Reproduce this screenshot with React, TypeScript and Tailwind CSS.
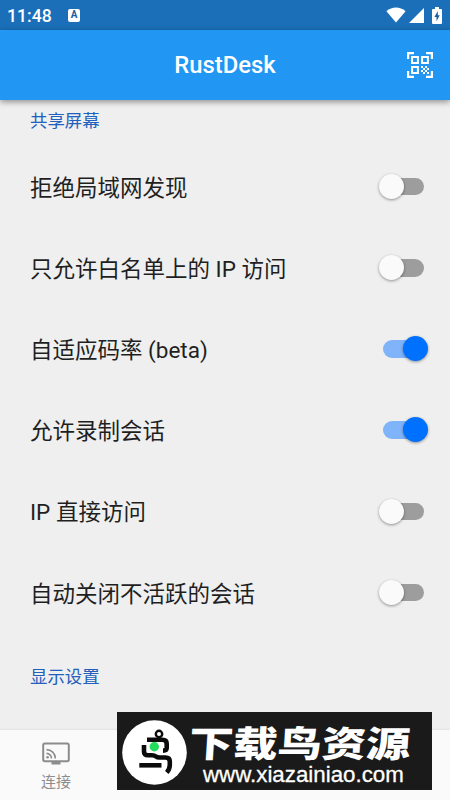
import React, { useState } from 'react';

interface Setting {
  id: string;
  label: string;
  enabled: boolean;
}

const initialSettings: Setting[] = [
  { id: 'deny-lan', label: '拒绝局域网发现', enabled: false },
  { id: 'whitelist', label: '只允许白名单上的 IP 访问', enabled: false },
  { id: 'abr', label: '自适应码率 (beta)', enabled: true },
  { id: 'record', label: '允许录制会话', enabled: true },
  { id: 'direct-ip', label: 'IP 直接访问', enabled: false },
  { id: 'auto-close', label: '自动关闭不活跃的会话', enabled: false },
];

const StatusBar: React.FC = () => (
  <div className="flex h-[30px] shrink-0 items-center justify-between bg-[#1a6fb8] pr-[8px] pl-[7px] text-white">
    <div className="flex items-center gap-[17px]">
      <span className="w-[44px] pt-[3px] text-[17.6px] leading-none font-medium whitespace-nowrap">11:48</span>
      <span className="flex h-[13px] w-[12px] items-center justify-center rounded-[2px] bg-white text-[10px] leading-none font-bold text-[#1a5f9f]">
        A
      </span>
    </div>
    <div className="flex items-center">
      <svg className="h-[16px] w-[20px]" viewBox="0 0 20 16" fill="currentColor">
        <path d="M10 15.6 0.4 4.2C6-.6 14-.6 19.6 4.2Z" />
      </svg>
      <svg className="ml-[3px] h-[15px] w-[15px]" viewBox="0 0 15 15" fill="currentColor">
        <path d="M15 0v15H0Z" />
      </svg>
      <svg className="ml-[8px] h-[17px] w-[10px]" viewBox="0 0 10 17">
        <path d="M3 0h4v2h2q1 0 1 1v13q0 1-1 1H1q-1 0-1-1V3q0-1 1-1h2Z" fill="currentColor" />
        <path d="M5.8 4 2.4 10h2.1v4.2L7.7 8.3H5.8Z" fill="#1a5f9f" />
      </svg>
    </div>
  </div>
);

const ScanIcon: React.FC = () => (
  <svg className="h-[26px] w-[26px]" viewBox="0 0 26 26" fill="none" stroke="currentColor" strokeWidth="2.2">
    <path d="M1.1 7V1.1H7M19 1.1h5.9V7M24.9 19v5.9H19M7 24.9H1.1V19" />
    <path d="M5.1 5.1h5.8v5.8H5.1ZM15.1 5.1h5.8v5.8h-5.8ZM5.1 15.1h5.8v5.8H5.1Z" strokeWidth="2" />
    <path
      d="M14 14h2v2h-2ZM18 14h2v2h-2ZM16 16h2v2h-2ZM20 16h2v2h-2ZM14 18h2v2h-2ZM18 18h2v2h-2ZM16 20h2v2h-2ZM20 20h2v2h-2Z"
      fill="currentColor"
      stroke="none"
    />
  </svg>
);

const Toggle: React.FC<{ checked: boolean; label: string; onChange: () => void }> = ({ checked, label, onChange }) => (
  <button
    role="switch"
    aria-checked={checked}
    aria-label={label}
    onClick={onChange}
    className={`relative h-[17.5px] w-[41px] rounded-full ${checked ? 'bg-[#7fb3fa]' : 'bg-[#9d9d9d]'}`}
  >
    <span
      className={`absolute -top-[4px] h-[25px] w-[25px] rounded-full shadow-[0_1px_3px_rgba(0,0,0,0.4)] ${
        checked ? 'left-[20px] bg-[#0071ff]' : '-left-[4px] bg-[#fafafa]'
      }`}
    />
  </button>
);

const SectionTitle: React.FC<{ children: React.ReactNode }> = ({ children }) => (
  <h2 className="text-[17.4px] leading-[26px] text-[#2160bd]">{children}</h2>
);

const Watermark: React.FC = () => (
  <div className="absolute top-[712px] left-[117px] z-20 flex h-[78px] w-[315px] items-center bg-[#1a1a1a] pl-[5px] text-white">
    <svg className="mt-[2px] h-[65px] w-[65px] shrink-0" viewBox="0 0 65 65" fill="none">
      <circle cx="32.5" cy="32.5" r="32.3" fill="#fff" />
      <g stroke="#0b0b0b" strokeWidth="4.6" strokeLinejoin="round">
        <circle cx="37" cy="14" r="3.2" strokeWidth="2.4" />
        <path d="M25 19.8H40.5q4.2 0 4.2 4V28q0 2.6-3.7 2.6" />
        <path d="M22 25v6.5q0 3.8 4 3.8h4q2.5 0 4 1.2 1.2 1 3.5 1h6q4.3 0 4.3 4V45q0 4-3 7.5" />
        <path d="M17.3 45.3H39.5" />
      </g>
      <circle cx="32.3" cy="26.8" r="4.7" fill="#22dd5c" />
    </svg>
    <div className="ml-[2px] flex flex-col pt-[12px]">
      <span className="h-[36px] w-[180px] origin-left scale-x-[1.23] -skew-x-3 text-[36px] leading-[36px] font-black whitespace-nowrap">
        下载鸟资源
      </span>
      <span className="ml-[14px] font-['Liberation_Sans',sans-serif] text-[22.3px] leading-[24px] [-webkit-text-stroke:0.3px_white]">
        www.xiazainiao.com
      </span>
    </div>
  </div>
);

const App: React.FC = () => {
  const [settings, setSettings] = useState(initialSettings);

  const toggle = (id: string) => {
    setSettings((prev) => prev.map((s) => (s.id === id ? { ...s, enabled: !s.enabled } : s)));
  };

  return (
    <div className="relative flex h-[800px] w-[450px] flex-col overflow-hidden bg-[#efefef] font-[Roboto,'Noto_Sans_CJK_SC',sans-serif]">
      <StatusBar />

      <header className="relative z-10 grid h-[70px] shrink-0 grid-cols-[1fr_auto_1fr] items-center bg-[#2196f3] px-[17px] text-white shadow-[0_2px_6px_rgba(0,0,0,0.4)]">
        <h1 className="col-start-2 pt-[2px] text-[23.8px] leading-none font-medium">RustDesk</h1>
        <button aria-label="scan" className="justify-self-end">
          <ScanIcon />
        </button>
      </header>

      <main className="flex-1 pr-[26px] pl-[30px]">
        <div className="pt-[8px]">
          <SectionTitle>共享屏幕</SectionTitle>
        </div>
        <ul className="mt-[12px]">
          {settings.map((s) => (
            <li key={s.id} className="flex h-[81.2px] items-center justify-between text-[22.5px] text-[#1f1f1f]">
              <span className="pt-[4px]">{s.label}</span>
              <Toggle checked={s.enabled} label={s.label} onChange={() => toggle(s.id)} />
            </li>
          ))}
        </ul>
        <div className="pt-[31px]">
          <SectionTitle>显示设置</SectionTitle>
        </div>
      </main>

      {/* Bottom navigation */}
      <nav className="flex h-[70px] shrink-0 bg-[#fafafa] shadow-[0_-1px_2px_rgba(0,0,0,0.06)]">
        <a className="flex w-[112px] flex-col items-center pt-[12px] text-[#8c8c8c]">
          <svg className="h-[24px] w-[28px]" viewBox="0 0 28 24" fill="none" stroke="currentColor" strokeWidth="2">
            <rect x="1.2" y="1.6" width="25.6" height="17.6" rx="1.6" />
            <path d="M9.5 21.2h9" strokeWidth="2.6" />
            <path d="M4.5 7.6a8.8 8.8 0 0 1 8.8 8.8M4.5 11.4a5 5 0 0 1 5 5" strokeWidth="1.6" />
            <circle cx="5.6" cy="15.3" r="1.3" fill="currentColor" stroke="none" />
          </svg>
          <span className="mt-[5px] text-[15px] leading-[22px]">连接</span>
        </a>
      </nav>

      <Watermark />
    </div>
  );
};

export default App;
